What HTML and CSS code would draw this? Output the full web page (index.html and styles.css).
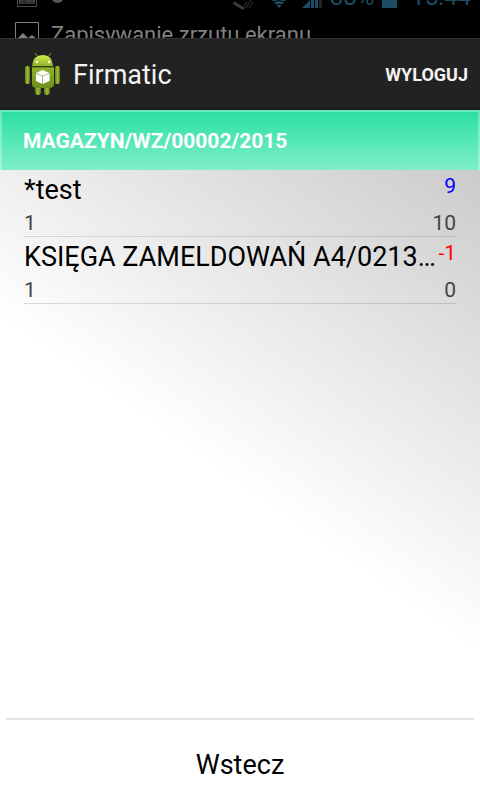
FILE: index.html
```html
<!DOCTYPE html>
<html lang="pl">
<head>
<meta charset="utf-8">
<meta name="viewport" content="width=device-width, initial-scale=1">
<title>Firmatic</title>
<link rel="stylesheet" href="styles.css">
</head>
<body>
<div class="system">
  <div class="status">
    <svg class="status-left" width="70" height="8" viewBox="0 0 70 8" aria-hidden="true">
      <path d="M17.500 0V6.500H36.500V0" fill="none" stroke="#4c4c4c"/>
      <path d="M19 0H35V4H19Z" fill="#444"/>
      <path d="M20 4V2L23 0H26L29 2L32 0L35 3V4Z" fill="#303030"/>
      <path d="M52 0H63Q61 3 57.500 3Q54 3 52 0Z" fill="#555"/>
    </svg>
    <svg class="status-icons" width="92" height="12" viewBox="0 0 92 12" aria-hidden="true">
      <path d="M1 1L12 8L10 10L0 4Z" fill="#3a3a3a"/>
      <path d="M11 7L14 2M13 8L18 0M16 8L20 2" stroke="#3a3a3a" fill="none"/>
      <path d="M39 0H53L46 8Z" fill="#1b4e64"/>
      <path d="M40 2Q46-1 52 2M43 5Q46 3 49 5" stroke="#000" fill="none"/>
      <path d="M69 8L77 0V8Z" fill="#1b4e64"/>
      <path d="M78 0H81V8H78ZM82 0H85V8H82Z" fill="#1b4e64"/>
      <path d="M86 0H89V8H86Z" fill="#222"/>
    </svg>
    <span class="percent">88%</span>
    <span class="battery"></span>
    <span class="clock">15:44</span>
  </div>
  <div class="notice">
    <svg width="24" height="24" viewBox="0 0 24 24" aria-hidden="true">
      <path d="M.5 24V.5H23.500V24" fill="none" stroke="#808080"/>
      <path d="M3 16L8 11L13 16L17 13L22 17V24H3Z" fill="#808080"/>
    </svg>
    <span>Zapisywanie zrzutu ekranu</span>
  </div>
</div>
<header class="bar">
  <svg class="logo" width="38" height="44" viewBox="0 0 38 44" aria-hidden="true">
    <defs>
      <linearGradient id="body" x1="0" y1="0" x2="0" y2="1"><stop offset="0" stop-color="#91b52c"/><stop offset="1" stop-color="#6b8f1c"/></linearGradient>
      <linearGradient id="head" x1="0" y1="0" x2="0" y2="1"><stop offset="0" stop-color="#d2f04c"/><stop offset="1" stop-color="#8eb32a"/></linearGradient>
      <linearGradient id="limb" x1="0" y1="0" x2="1" y2="0"><stop offset="0" stop-color="#5d7d18"/><stop offset=".5" stop-color="#9abd34"/><stop offset="1" stop-color="#587717"/></linearGradient>
    </defs>
    <path d="M11 0L14 4M27 0L24 4" stroke="#7f9a2c" stroke-linecap="round"/>
    <rect x="11" y="31" width="6" height="11" rx="3" fill="url(#limb)"/>
    <rect x="20" y="31" width="6" height="11" rx="3" fill="url(#limb)"/>
    <rect x="1" y="13" width="5" height="18" rx="2" fill="url(#limb)"/>
    <rect x="31" y="13" width="5" height="18" rx="2" fill="url(#limb)"/>
    <path d="M8 13Q9 2 19 2Q28 2 29 13Z" fill="url(#head)"/>
    <path d="M8 14H30V31Q30 35 25 35H13Q8 35 8 31Z" fill="url(#body)"/>
    <path d="M8 14H30" stroke="#425a12"/>
    <circle cx="13" cy="9" r="1.200" fill="#fff"/>
    <circle cx="25" cy="9" r="1.200" fill="#fff"/>
    <path d="M18.500 17L25.500 20V28L18.500 31L12 28V20Z" fill="#fff"/>
    <path d="M12 20.500L18.500 23L25 20.500M18.500 23V31" fill="none" stroke="#a9bf7a"/>
  </svg>
  <h1>Firmatic</h1>
  <button class="logout" type="button">WYLOGUJ</button>
</header>
<main class="screen">
  <h2 class="document">MAGAZYN/WZ/00002/2015</h2>
  <ul class="items">
    <li>
      <div class="line"><span class="name">*test</span><span class="diff plus">9</span></div>
      <div class="line small"><span>1</span><span>10</span></div>
    </li>
    <li>
      <div class="line"><span class="name">KSIĘGA ZAMELDOWAŃ A4/0213…</span><span class="diff minus">-1</span></div>
      <div class="line small"><span>1</span><span>0</span></div>
    </li>
  </ul>
  <footer><button class="back" type="button">Wstecz</button></footer>
</main>
</body>
</html>
```
FILE: styles.css
```css
* {
  box-sizing: border-box;
}

body {
  margin: 0;
  min-height: 100vh;
  display: flex;
  flex-direction: column;
  font-family: Roboto, "Noto Sans", sans-serif;
  color: #000;
}

h1, h2, ul {
  margin: 0;
  padding: 0;
}

button {
  border: 0;
  background: none;
  font-family: inherit;
  cursor: pointer;
}

.system {
  height: 38px;
  overflow: hidden;
  background: #000;
}

.status {
  height: 10px;
  display: flex;
  align-items: flex-start;
  overflow: hidden;
  color: #1b4e64;
  padding-right: 9px;
}

.status svg,
.status span {
  flex: none;
}

.status-icons {
  margin-left: auto;
}

.percent,
.clock {
  font-size: 24px;
  line-height: 24px;
  margin-top: -15px;
}

.percent {
  margin-left: 5px;
}

.battery {
  width: 15px;
  height: 8px;
  margin: 0 14px 0 8px;
  background: #1b4e64;
}

.notice {
  display: flex;
  gap: 12px;
  padding: 12px 15px 0;
  color: #808080;
  font-size: 22px;
  line-height: 26px;
  white-space: nowrap;
}

.bar {
  height: 72px;
  display: flex;
  align-items: center;
  padding: 3px 12px 0 24px;
  background: #222;
  border-top: 1px solid #333;
  border-bottom: 3px solid #1a1a1a;
  color: #f3f3f3;
}

.bar h1 {
  margin-left: 11px;
  font-size: 27px;
  line-height: 32px;
  font-weight: 400;
}

.logout {
  margin-left: auto;
  padding: 12px 0;
  color: #f3f3f3;
  font-size: 18px;
  line-height: 24px;
  font-weight: 700;
}

.screen {
  flex: 1;
  display: flex;
  flex-direction: column;
  background: linear-gradient(215deg, #c5c5c5, #fff 53%);
}

.document {
  padding: 15px 21px;
  border: 2px solid rgba(255, 255, 255, 0.3);
  border-bottom: 0;
  background: linear-gradient(#2bdda2, #3de3ab 25%, #80efca) border-box;
  color: #fff;
  font-size: 21px;
  line-height: 28px;
  font-weight: 700;
}

.items {
  flex: 1;
  padding: 0 24px;
  list-style: none;
}

.items li {
  height: 67px;
  border-bottom: 1px solid rgba(0, 0, 0, 0.13);
}

.line {
  display: flex;
  justify-content: space-between;
}

.name {
  min-width: 0;
  overflow: hidden;
  white-space: nowrap;
  font-size: 27px;
  line-height: 40px;
}

.diff {
  font-size: 21px;
  line-height: 32px;
}

.plus {
  color: #00f;
}

.minus {
  color: #f00;
}

.small {
  color: #444;
  font-size: 21px;
  line-height: 26px;
}

footer {
  margin: 0 6px;
  border-top: 2px solid #e3e3e3;
}

.back {
  width: 100%;
  padding: 29px 0 19px;
  color: #000;
  font-size: 27px;
  line-height: 32px;
}
```
